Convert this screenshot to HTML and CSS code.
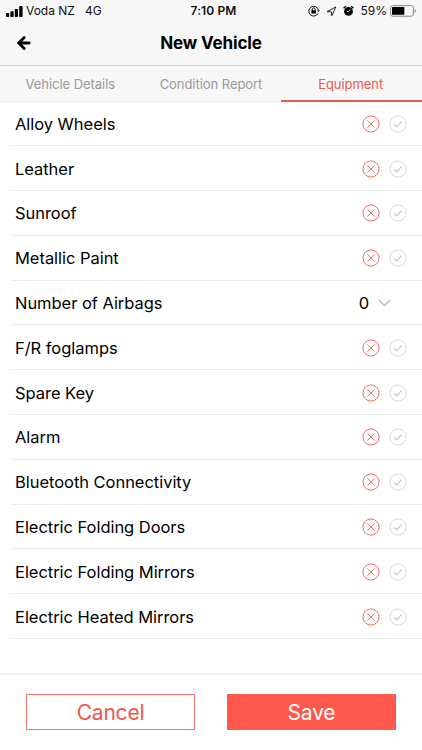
FILE: index.html
```html
<!DOCTYPE html>
<html lang="en">
<head>
<meta charset="utf-8">
<title>New Vehicle</title>
<link rel="stylesheet" href="styles.css">
</head>
<body>
<svg class="defs" aria-hidden="true">
  <symbol id="no" viewBox="0 0 18 18"><circle cx="9" cy="9" r="8.1"/><path d="M5.4 5.4l7.2 7.2M12.6 5.4l-7.2 7.2"/></symbol>
  <symbol id="yes" viewBox="0 0 18 18"><circle cx="9" cy="9" r="8.1"/><path d="M5.2 9.5l2.4 2.3 5.2-5.5" stroke="#c6c6c6" stroke-width="1.2"/></symbol>
</svg>
<div class="screen">
  <header class="top">
    <div class="status">
      <div class="carrier">
        <svg class="signal" width="17" height="11" viewBox="0 0 17 11"><rect x="0" y="7" width="3.2" height="4" rx=".8"/><rect x="4.4" y="5.2" width="3.2" height="5.8" rx=".8"/><rect x="8.8" y="3" width="3.2" height="8" rx=".8"/><rect x="13.2" y="0" width="3.4" height="11" rx=".8"/></svg>
        <span class="network">Voda NZ</span><span class="mode">4G</span>
      </div>
      <div class="time">7:10 PM</div>
      <div class="indicators">
        <svg class="lock" width="12" height="12" viewBox="0 0 12 12"><path d="M10.4 4.8A4.9 4.9 0 1 0 10.1 8.3" fill="none" stroke="#111"/><path d="M9 5.2h2.9l-1.4 1.9z"/><rect x="3.4" y="5.2" width="4.6" height="3.4" rx=".4"/><path d="M4.3 5.4V4.2a1.4 1.4 0 0 1 2.8 0v1.2" fill="none" stroke="#111" stroke-width=".9"/></svg>
        <svg class="locate" width="11" height="11" viewBox="0 0 11 11"><path d="M1 5.7L9.8 1 5.8 9.8 5.3 5.8z" fill="none" stroke="#222" stroke-linejoin="round"/></svg>
        <svg class="alarm" width="11" height="12" viewBox="0 0 11 12"><circle cx="5.5" cy="6.4" r="4.4"/><path d="M1.1 2.7L2.6 1.5M9.9 2.7L8.4 1.5" stroke="#111" stroke-width="1.5" stroke-linecap="round"/><path d="M5.6 6.5L7.3 4.4M5.6 6.5H3.8" stroke="#f7f7f7" stroke-width=".8" fill="none"/></svg>
        <span class="percent">59%</span>
        <svg class="battery" width="27" height="12" viewBox="0 0 27 12"><rect x=".6" y=".6" width="22.8" height="10.6" rx="2" fill="none" stroke="#888"/><rect x="2" y="2" width="12.3" height="7.8" rx=".6"/><path d="M24.6 4v4q1.4-.6 1.4-2t-1.4-2z" fill="#999"/></svg>
      </div>
    </div>
    <div class="title-row">
      <svg class="back" width="16" height="16" viewBox="0 0 16 16"><path d="M8.2 2.4L2.7 8l5.5 5.6M3 8h10.2" fill="none" stroke="#000" stroke-width="2.8" stroke-linecap="round"/></svg>
      <h1>New Vehicle</h1>
    </div>
  </header>
  <nav class="tabs">
    <div class="tab"><span>Vehicle Details</span></div>
    <div class="tab"><span>Condition Report</span></div>
    <div class="tab active"><span>Equipment</span></div>
  </nav>
  <main class="list">
    <div class="row"><span>Alloy Wheels</span><div class="choice"><svg class="no"><use href="#no"/></svg><svg class="yes"><use href="#yes"/></svg></div></div>
    <div class="row"><span>Leather</span><div class="choice"><svg class="no"><use href="#no"/></svg><svg class="yes"><use href="#yes"/></svg></div></div>
    <div class="row"><span>Sunroof</span><div class="choice"><svg class="no"><use href="#no"/></svg><svg class="yes"><use href="#yes"/></svg></div></div>
    <div class="row"><span>Metallic Paint</span><div class="choice"><svg class="no"><use href="#no"/></svg><svg class="yes"><use href="#yes"/></svg></div></div>
    <div class="row"><span>Number of Airbags</span><div class="count"><span>0</span><svg width="13" height="8" viewBox="0 0 13 8"><path d="M.8 1l5.7 5.6L12.2 1" fill="none" stroke="#c4c4c4" stroke-width="1.7"/></svg></div></div>
    <div class="row"><span>F/R foglamps</span><div class="choice"><svg class="no"><use href="#no"/></svg><svg class="yes"><use href="#yes"/></svg></div></div>
    <div class="row"><span>Spare Key</span><div class="choice"><svg class="no"><use href="#no"/></svg><svg class="yes"><use href="#yes"/></svg></div></div>
    <div class="row"><span>Alarm</span><div class="choice"><svg class="no"><use href="#no"/></svg><svg class="yes"><use href="#yes"/></svg></div></div>
    <div class="row"><span>Bluetooth Connectivity</span><div class="choice"><svg class="no"><use href="#no"/></svg><svg class="yes"><use href="#yes"/></svg></div></div>
    <div class="row"><span>Electric Folding Doors</span><div class="choice"><svg class="no"><use href="#no"/></svg><svg class="yes"><use href="#yes"/></svg></div></div>
    <div class="row"><span>Electric Folding Mirrors</span><div class="choice"><svg class="no"><use href="#no"/></svg><svg class="yes"><use href="#yes"/></svg></div></div>
    <div class="row"><span>Electric Heated Mirrors</span><div class="choice"><svg class="no"><use href="#no"/></svg><svg class="yes"><use href="#yes"/></svg></div></div>
  </main>
  <footer class="actions">
    <button class="cancel">Cancel</button>
    <button class="save">Save</button>
  </footer>
</div>
</body>
</html>
```
FILE: styles.css
```css
* { box-sizing: border-box; }
body { margin: 0; background: #fff; color: #000; font-family: Inter, "Liberation Sans", sans-serif; }
svg { display: block; flex: none; }
.defs { position: absolute; width: 0; height: 0; }
.screen { width: 422px; height: 750px; display: flex; flex-direction: column; overflow: hidden; }
.top { height: 66px; flex: none; background: #f7f7f7; border-bottom: 1px solid #d3d3d7; }
.status { height: 22px; display: grid; grid-template-columns: 1fr auto 1fr; align-items: center; padding: 0 5px 0 6px; font-size: 12px; line-height: 22px; color: #111; }
.carrier, .indicators { display: flex; align-items: center; }
.signal { margin-right: 3px; }
.mode { margin-left: 10px; }
.time { font-weight: 600; padding-left: 4px; letter-spacing: .1px; }
.indicators { justify-content: flex-end; }
.lock { margin-right: 6px; }
.locate { margin-right: 6px; }
.alarm { margin-right: 6px; }
.percent { margin-right: 3px; }
.title-row { height: 42px; display: grid; grid-template-columns: 48px 1fr 48px; align-items: center; }
.back { margin-left: 16px; }
h1 { margin: 0; text-align: center; font-size: 17px; line-height: 22px; font-weight: 700; letter-spacing: -.15px; }
.tabs { height: 36px; flex: none; display: grid; grid-template-columns: repeat(3, 1fr); background: #f7f7f7; }
.tab { display: flex; align-items: center; justify-content: center; color: #999; font-size: 13px; letter-spacing: -.05px; border-bottom: 1px solid #eee; }
.tab.active { color: #f2574b; border-bottom: 2px solid #ef5a50; padding: 1px 2px 0 0; }
.list { flex: 1; margin-top: -.6px; }
.row { height: 44.8px; margin-left: 11px; padding: 1px 15px 0 4px; display: flex; align-items: center; justify-content: space-between; border-bottom: 1px solid #ececec; font-size: 16.5px; letter-spacing: -.04px; }
.choice { display: flex; gap: 9px; }
.choice svg { width: 18px; height: 18px; fill: none; stroke-width: 1; }
.no { stroke: #ee6c64; }
.yes { stroke: #d8d8d8; }
.count { display: flex; align-items: center; gap: 9px; padding-right: 16px; }
.actions { height: 77px; flex: none; border-top: 2px solid #f0f0f0; padding: 19px 26px 0; display: flex; justify-content: space-between; }
.actions button { width: 169px; height: 36px; padding: 1px 0 0; border: 1px solid #f6766c; border-radius: 0; font: 400 21px/33px Inter, "Liberation Sans", sans-serif; letter-spacing: -.2px; background: #fff; color: #f2574b; }
.actions .save { background: #ff594d; border-color: #ff594d; color: #fff; }
```
